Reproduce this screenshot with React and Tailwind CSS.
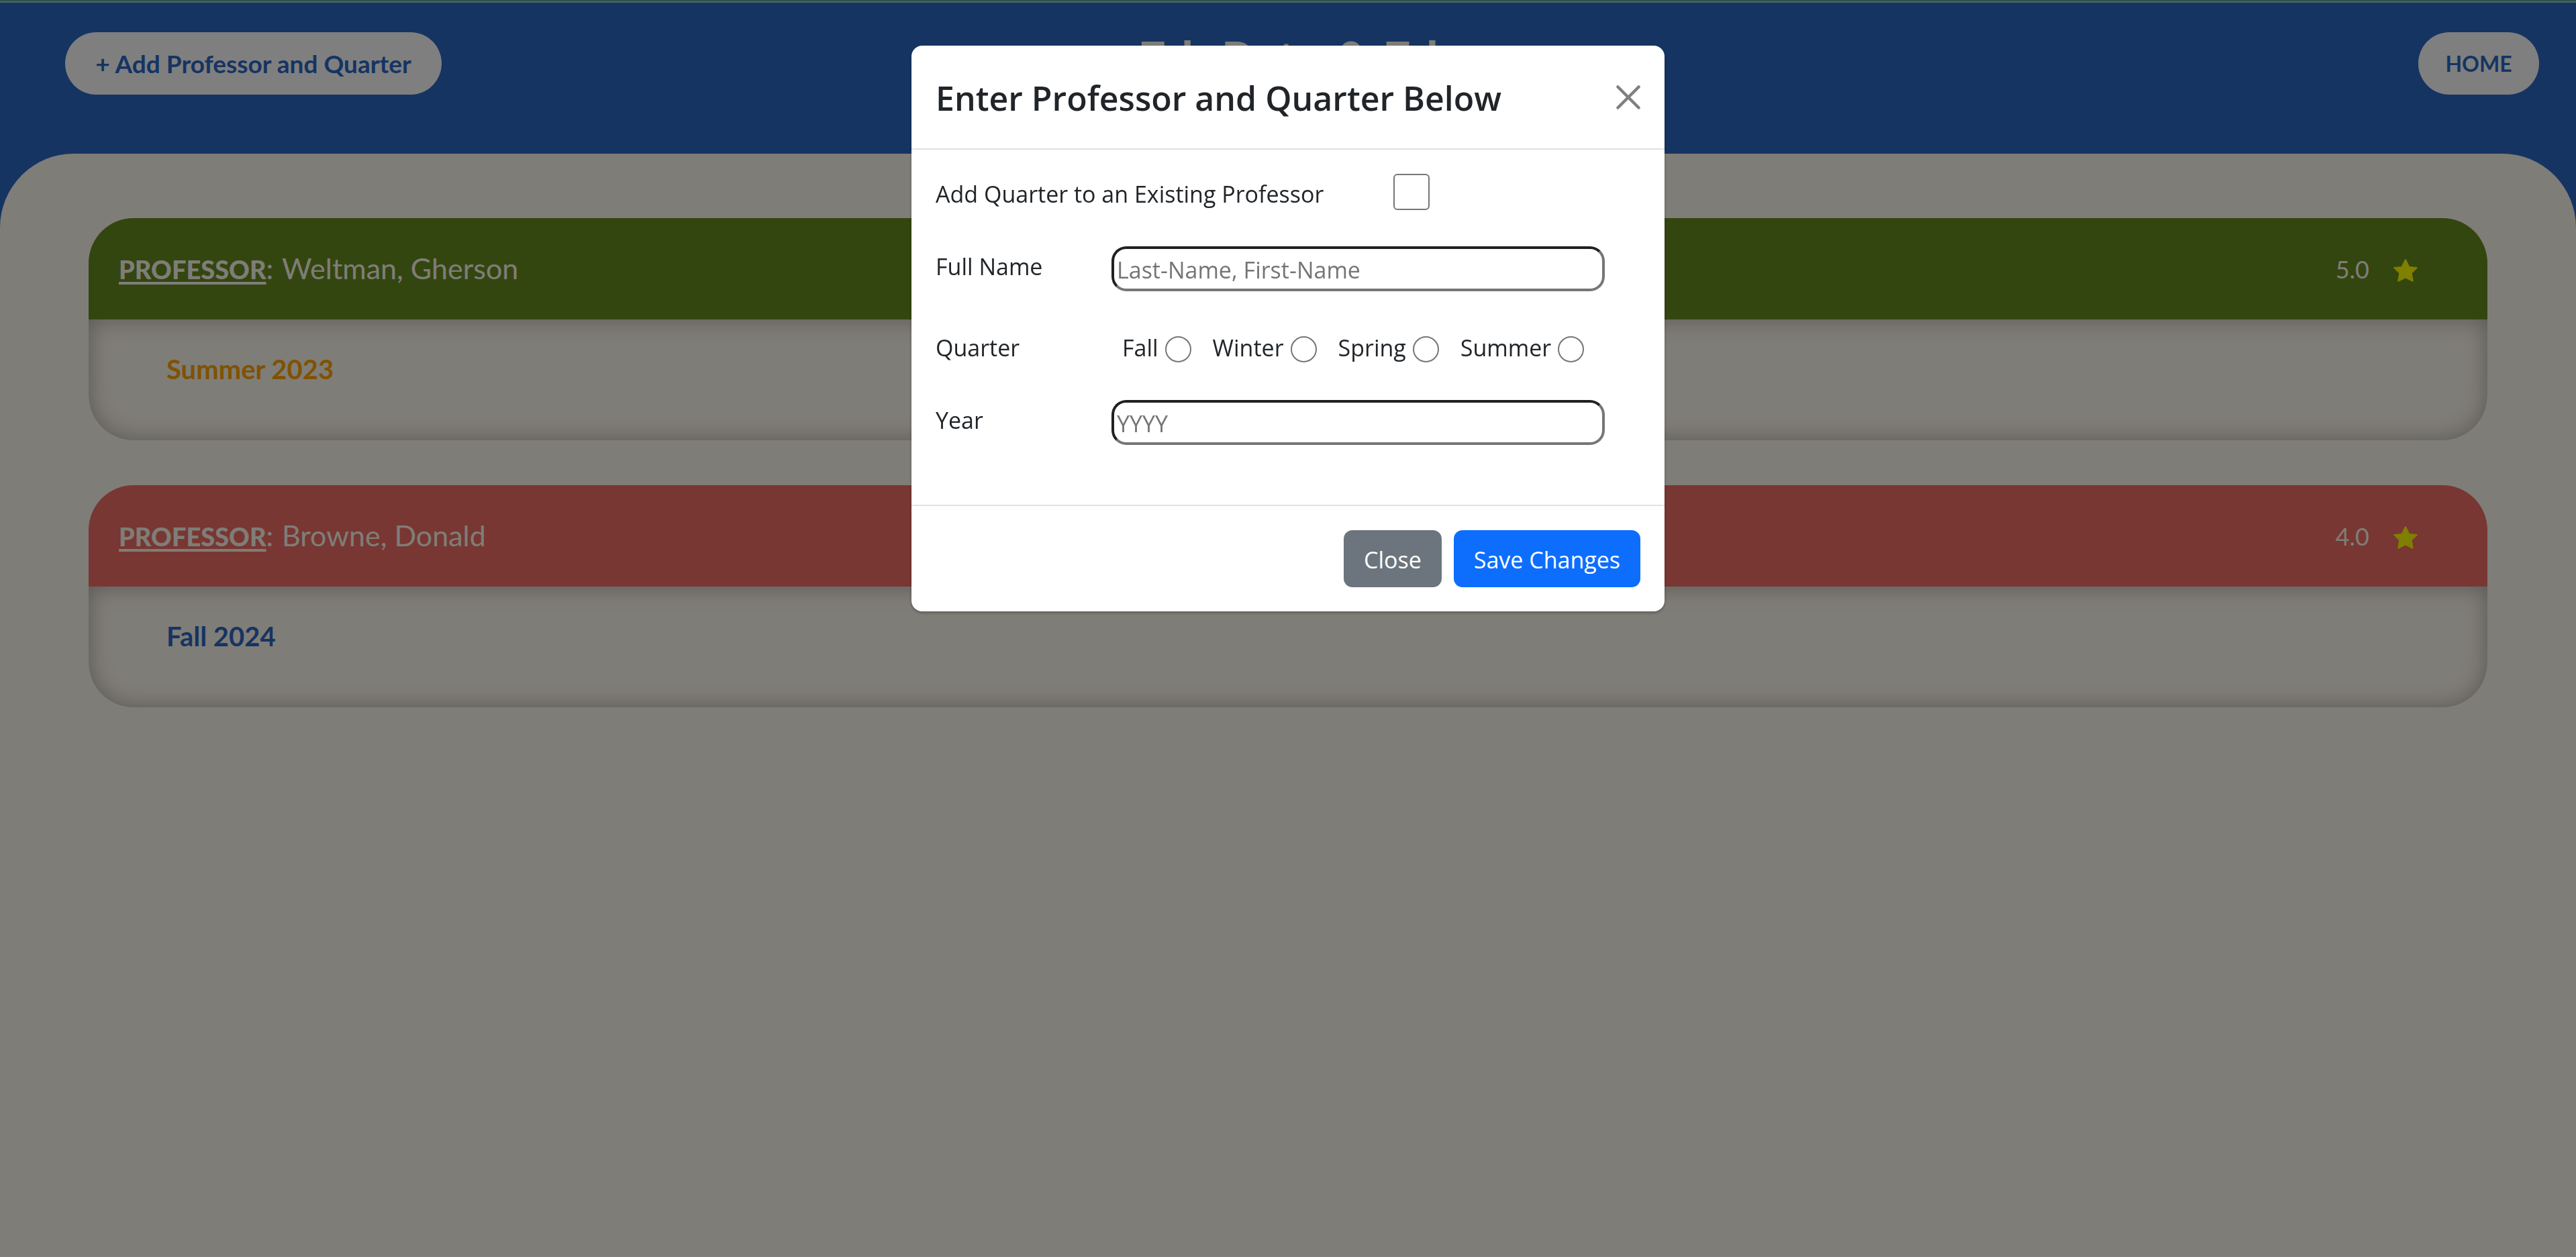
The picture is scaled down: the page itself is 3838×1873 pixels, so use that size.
const courses = [
  { name: "Weltman, Gherson", rating: "5.0", term: "Summer 2023", header: "bg-[#698c20]", text: "text-[#ffa500]" },
  { name: "Browne, Donald", rating: "4.0", term: "Fall 2024", header: "bg-[#f06e64]", text: "text-[#2d68c4]" },
];

const quarters = ["Fall", "Winter", "Spring", "Summer"];

function Star() {
  return (
    <svg viewBox="0 0 36 34" className="mt-1 h-[34px] w-9 fill-[#ffff00]" aria-hidden="true">
      <path d="M16.800 .9q1.200-1.500 2.400 0l4.800 10 11 1.100q1.500.500.300 1.700l-7.600 7.600 2 11.300q-.200 1.500-1.700 1L18 28.600 8 33.600q-1.500.500-1.700-1l2-11.300L.700 13.700q-1.200-1.200.300-1.700l11-1.100z" />
    </svg>
  );
}

function ProfessorCard({ course }) {
  return (
    <article className="overflow-hidden rounded-[67px]">
      <header className={`flex h-[151px] items-center justify-between pr-[104px] pl-[45px] text-[#fffaf0] ${course.header}`}>
        <h2 className="flex items-baseline text-[43px]">
          <span className="w-[243px]">
            <b className="text-[38px] font-black underline decoration-4 underline-offset-4">PROFESSOR</b>:
          </span>
          {course.name}
        </h2>
        <div className="flex items-center gap-9 text-[36px]">
          <span>{course.rating}</span>
          <Star />
        </div>
      </header>
      <div className="h-[180px] rounded-b-[67px] pt-12 pl-[116px] shadow-[inset_0_0_34px_rgba(0,0,0,0.3)]">
        <a href="#" className={`text-[40px] leading-[52px] font-bold ${course.text}`}>{course.term}</a>
      </div>
    </article>
  );
}

const field =
  "h-[67px] w-[735px] rounded-[22px] border-4 border-t-[#212121] border-l-[#212121] border-r-[#767676] border-b-[#767676] bg-white px-1 pt-0.5 text-[34px] placeholder:text-[#757575]";

const action = "h-[85px] rounded-[13px] px-[30px] pt-1 text-white";

function Modal() {
  return (
    <div className="fixed inset-0 flex items-start justify-center bg-black/50 pt-[68px]">
      <section
        role="dialog"
        aria-labelledby="modal-title"
        className="w-[1122px] rounded-[16px] bg-white font-['Open_Sans',sans-serif] text-[34px] text-[#212529] shadow-[0_2px_4px_rgba(0,0,0,0.3)]"
      >
        <header className="flex h-[155px] items-center justify-between border-b-2 border-[#dee2e6] px-9">
          <h1 id="modal-title" className="pt-1 text-[50px] font-semibold">Enter Professor and Quarter Below</h1>
          <button type="button" aria-label="Close dialog">
            <svg viewBox="0 0 36 36" className="size-9 stroke-[#7f7f7f]" fill="none" strokeWidth="4.500" strokeLinecap="round">
              <path d="M2.500 2.500l31 31M33.500 2.500l-31 31" />
            </svg>
          </button>
        </header>
        <form className="h-[529px] px-9 pt-9">
          <div className="flex h-[108px] items-start">
            <label htmlFor="existing" className="w-[682px] leading-[60px]">Add Quarter to an Existing Professor</label>
            <input id="existing" type="checkbox" className="size-[54px] appearance-none rounded-[6px] border-2 border-[#767676] bg-white" />
          </div>
          <div className="flex h-[121px] items-start">
            <label htmlFor="name" className="w-[262px] leading-[60px]">Full Name</label>
            <input id="name" type="text" placeholder="Last-Name, First-Name" className={field} />
          </div>
          <fieldset className="flex h-[108px] items-start gap-8">
            <legend className="float-left w-[246px] leading-[60px]">Quarter</legend>
            {quarters.map((q) => (
              <label key={q} className="flex items-center gap-[10px] leading-[60px]">
                {q}
                <input type="radio" name="quarter" className="mt-1 size-[39px] appearance-none rounded-full border-2 border-[#767676] bg-white" />
              </label>
            ))}
          </fieldset>
          <div className="flex items-start">
            <label htmlFor="year" className="w-[262px] leading-[60px]">Year</label>
            <input id="year" type="text" placeholder="YYYY" className={field} />
          </div>
        </form>
        <footer className="flex justify-end gap-[18px] border-t-2 border-[#dee2e6] p-9">
          <button type="button" className={`bg-[#6c757d] ${action}`}>Close</button>
          <button type="button" className={`bg-[#0d6efd] ${action}`}>Save Changes</button>
        </footer>
      </section>
    </div>
  );
}

export default function App() {
  return (
    <div className="min-h-screen bg-[#2d68c4] font-['Lato',sans-serif]">
      <div className="h-1 border-b-2 border-[#a2ccc0] bg-[#59a898]" />
      <header className="grid h-[225px] grid-cols-[1fr_auto_1fr] items-start pt-11 pr-[97px] pl-[97px]">
        <button type="button" className="h-[93px] w-[561px] rounded-full bg-white text-[37px] font-bold text-[#2d68c4]">
          + Add Professor and Quarter
        </button>
        <p className="text-[74px] leading-[80px] font-bold text-[#fffaf0]">EduRate &amp; Ed</p>
        <a href="#" className="-mr-[42px] flex h-[93px] w-[180px] items-center justify-center justify-self-end rounded-full bg-white text-[32px] font-bold text-[#2d68c4]">
          HOME
        </a>
      </header>
      <main className="flex min-h-[1644px] flex-col gap-[67px] rounded-t-[110px] bg-[#fffaf0] px-[132px] pt-24">
        {courses.map((c) => (
          <ProfessorCard key={c.name} course={c} />
        ))}
      </main>
      <Modal />
    </div>
  );
}
